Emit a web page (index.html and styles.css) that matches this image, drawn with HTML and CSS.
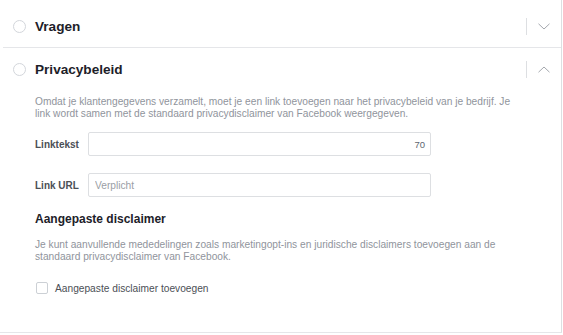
FILE: index.html
```html
<!DOCTYPE html>
<html lang="nl">
<head>
  <meta charset="UTF-8" />
  <title>Formulier - Privacybeleid</title>
  <link rel="stylesheet" href="styles.css">
</head>
<body>
  <div class="panel">
    <div class="section first">
      <div class="section-head">
        <span class="radio"></span>
        <span class="section-title">Vragen</span>
        <span class="toggle">
          <svg width="12" height="7" viewBox="0 0 12 7"><path d="M0.5 0.8 L6 6 L11.5 0.8" fill="none" stroke="#a3a7ad" stroke-width="1"/></svg>
        </span>
      </div>
    </div>

    <div class="section">
      <div class="section-head">
        <span class="radio"></span>
        <span class="section-title">Privacybeleid</span>
        <span class="toggle">
          <svg width="12" height="7" viewBox="0 0 12 7"><path d="M0.5 6.2 L6 1 L11.5 6.2" fill="none" stroke="#a3a7ad" stroke-width="1"/></svg>
        </span>
      </div>

      <div class="section-body">
        <p class="hint">Omdat je klantengegevens verzamelt, moet je een link toevoegen naar het privacybeleid van je bedrijf. Je link wordt samen met de standaard privacydisclaimer van Facebook weergegeven.</p>

        <div class="field">
          <label for="link-text">Linktekst</label>
          <div class="input-wrap">
            <input id="link-text" type="text" />
            <span class="counter">70</span>
          </div>
        </div>

        <div class="field url">
          <label for="link-url">Link URL</label>
          <div class="input-wrap">
            <input id="link-url" type="text" placeholder="Verplicht" />
          </div>
        </div>

        <h3>Aangepaste disclaimer</h3>
        <p class="hint">Je kunt aanvullende mededelingen zoals marketingopt-ins en juridische disclaimers toevoegen aan de standaard privacydisclaimer van Facebook.</p>

        <label class="check">
          <span class="box"></span>
          Aangepaste disclaimer toevoegen
        </label>
      </div>
    </div>
  </div>
</body>
</html>
```

FILE: styles.css
```css
* {
  box-sizing: border-box;
  margin: 0;
  padding: 0;
  font-family: 'Liberation Sans', Arial, sans-serif;
}

body {
  background-color: #fff;
}

.panel {
  width: 562px;
  height: 333px;
  border-right: 1px solid #dddfe2;
  border-bottom: 1px solid #e5e6e9;
  padding-top: 5px;
}

.section {
  margin-left: 3px;
}

.section.first {
  border-bottom: 1px solid #e5e6e9;
}

.section-head {
  height: 42px;
  display: flex;
  align-items: center;
  padding-left: 10px;
}

.radio {
  width: 13px;
  height: 13px;
  border: 1px solid #d3d6db;
  border-radius: 50%;
  margin-right: 9px;
}

.section-title {
  font-size: 13.6px;
  font-weight: bold;
  color: #1d2129;
  flex: 1;
}

.toggle {
  height: 17px;
  width: 34px;
  border-left: 1px solid #dddfe2;
  display: flex;
  align-items: center;
  justify-content: center;
  margin-right: 1px;
}

.section-body {
  padding: 6px 0 0 32px;
}

.hint {
  font-size: 10.2px;
  line-height: 12px;
  color: #90949c;
  width: 485px;
}

.field {
  display: flex;
  align-items: center;
  margin-top: 12px;
}

.field.url {
  margin-top: 17px;
}

.field label {
  width: 53px;
  font-size: 10px;
  font-weight: bold;
  color: #4b4f56;
}

.input-wrap {
  position: relative;
  width: 343px;
}

.input-wrap input {
  width: 100%;
  height: 24px;
  border: 1px solid #dddfe2;
  border-radius: 2px;
  padding: 0 6px;
  font-size: 10.2px;
  color: #1d2129;
  outline: none;
}

.input-wrap input::placeholder {
  color: #9a9ea5;
}

.counter {
  position: absolute;
  right: 6px;
  top: 7px;
  font-size: 9.5px;
  color: #606770;
}

h3 {
  font-size: 12px;
  color: #1d2129;
  margin-top: 14px;
  line-height: 16px;
}

h3 + .hint {
  margin-top: 12px;
}

.check {
  display: flex;
  align-items: center;
  margin-top: 19px;
  font-size: 10.2px;
  color: #4b4f56;
}

.box {
  width: 12px;
  height: 12px;
  border: 1px solid #ccd0d5;
  border-radius: 2px;
  margin: 0 7px 0 1px;
}
```
